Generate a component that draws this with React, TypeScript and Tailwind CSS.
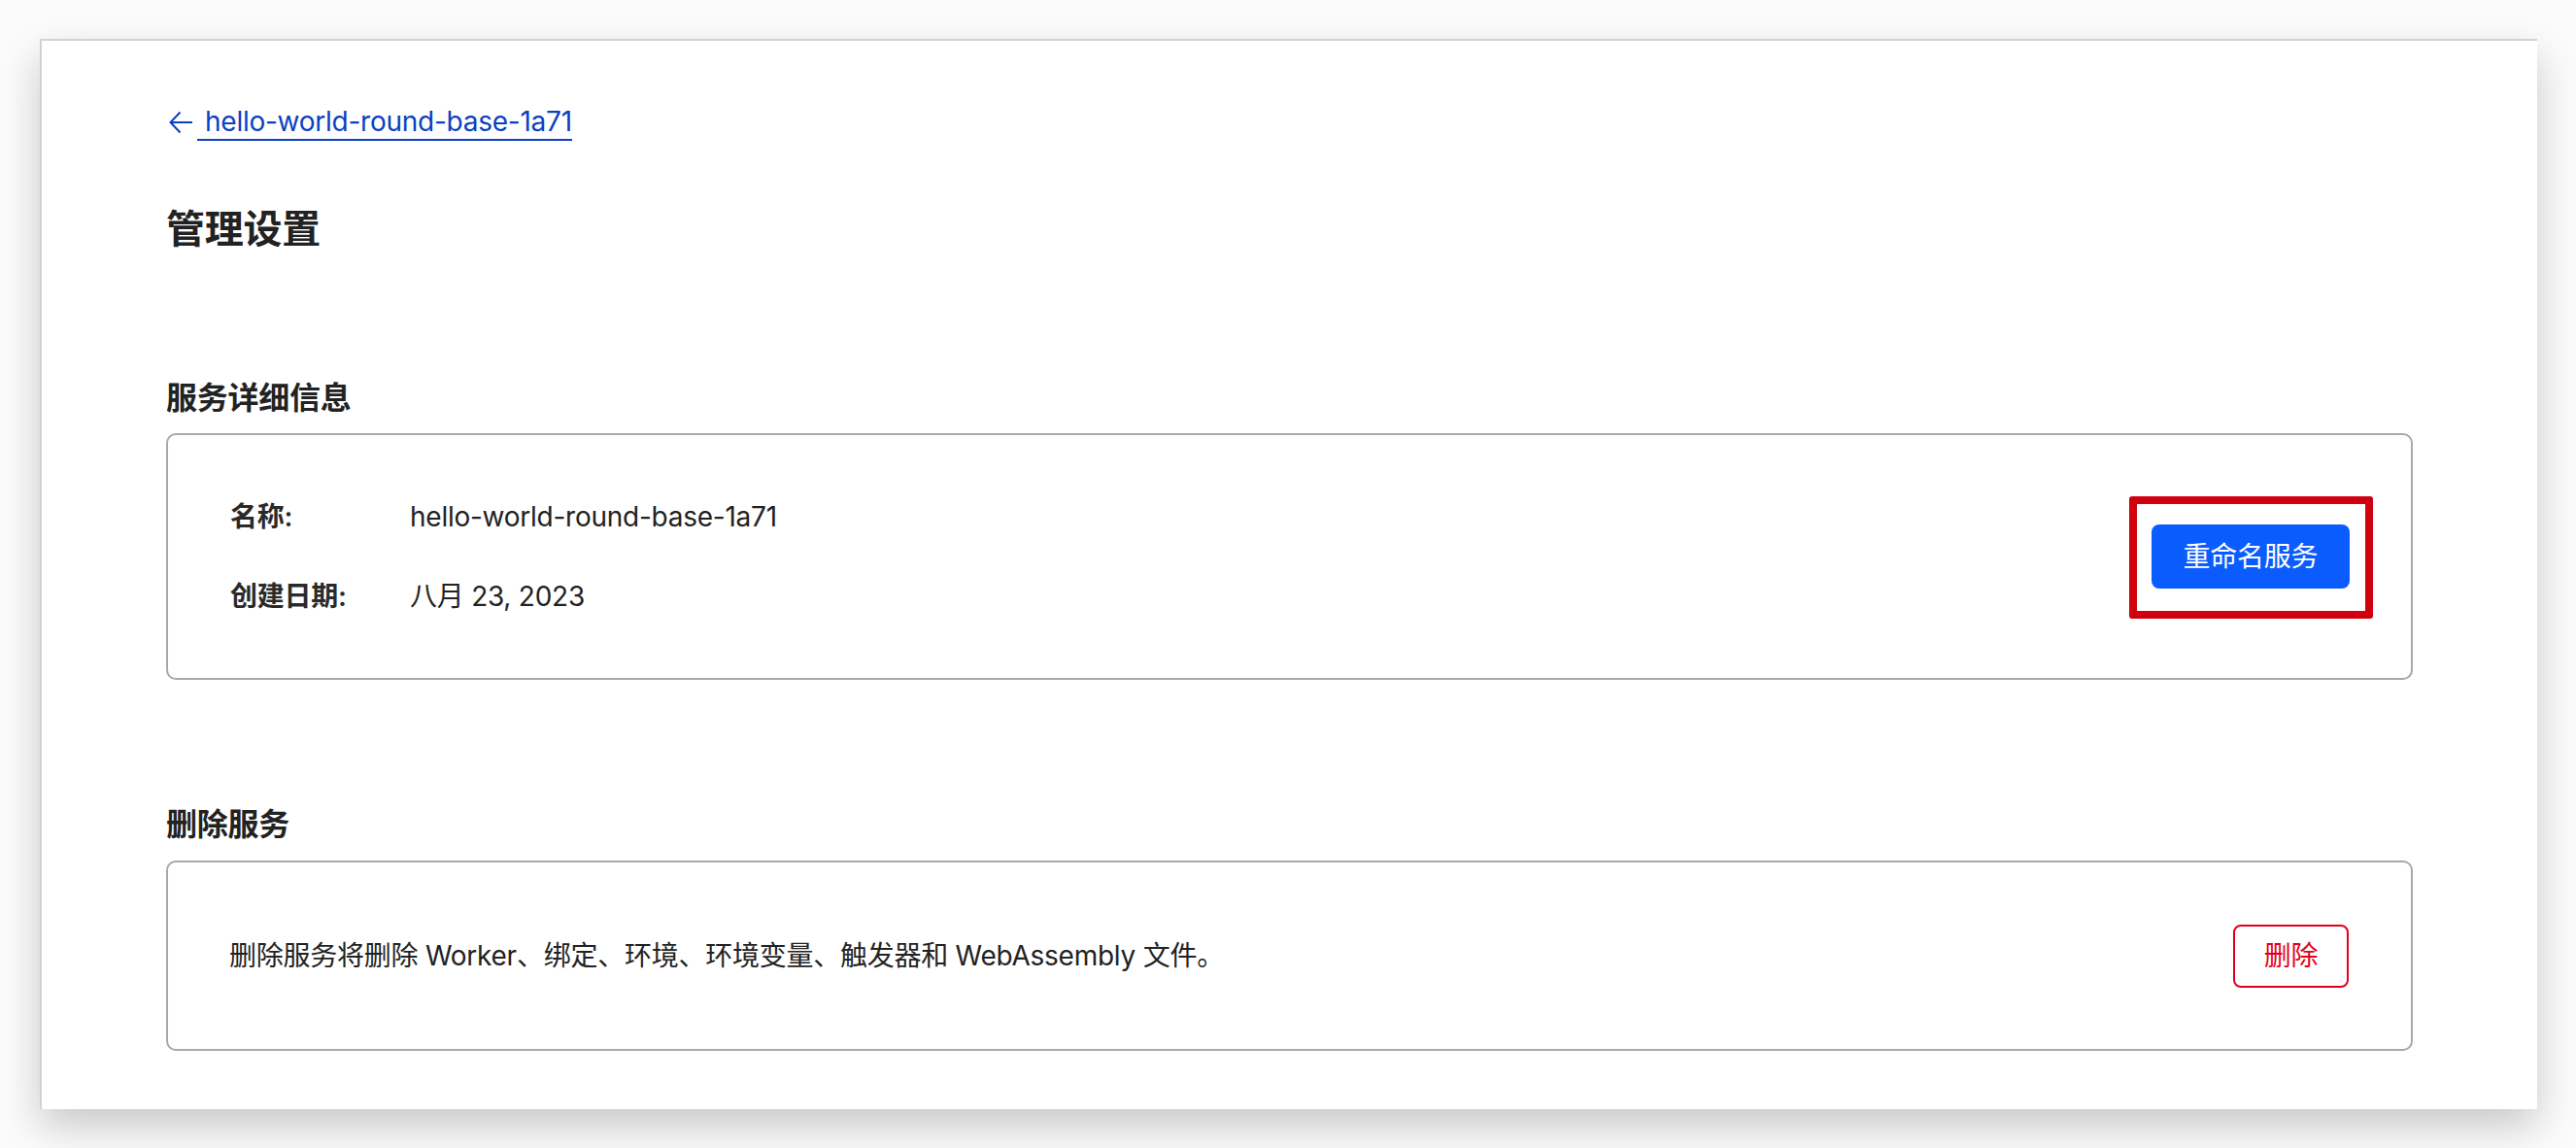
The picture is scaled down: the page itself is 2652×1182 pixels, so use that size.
import React from "react";

const font = "font-['Inter','Noto_Sans_CJK_SC',sans-serif] tracking-[-0.25px]";

function Row({ label, value }: { label: string; value: string }) {
  return (
    <div className="flex h-[40px] items-center">
      <span className="w-[185px] shrink-0 text-[28px] font-semibold text-[#2a2a2a]">{label}</span>
      <span className="text-[28px] text-[#222]">{value}</span>
    </div>
  );
}

export default function App() {
  return (
    <div className={`${font} h-[1182px] w-[2652px] overflow-hidden bg-[#fbfbfb] pl-[41px] pr-[40px] pt-[40px]`}>
      <div className="flex h-[1102px] flex-col border-l-2 border-t-2 border-[#d2d2d2] bg-white pl-[128px] pr-[128px] pt-[64px] shadow-[0_18px_40px_rgba(0,0,0,0.2)]">
        {/* Back link */}
        <div className="flex h-[40px] items-center text-[#0b3fc4]">
          <svg width="26" height="24" viewBox="0 0 26 24" fill="none" stroke="currentColor" strokeWidth="2" className="ml-[3px] mr-[3px]">
            <path d="M24 12H2M11.5 1.5L1.5 12 11.5 22.5" />
          </svg>
          <a href="#" className="border-b-[2.5px] border-[#0b3fc4] pl-[8px] text-[28px] leading-[36px]">
            hello-world-round-base-1a71
          </a>
        </div>

        <h1 className="mt-[66px] h-[48px] text-[40px] font-bold leading-[48px] text-[#222]">管理设置</h1>

        {/* Service details */}
        <h2 className="mt-[130px] h-[40px] text-[32px] font-semibold leading-[40px] text-[#222]">服务详细信息</h2>
        <div className="mt-[16px] flex h-[254px] items-center justify-between rounded-[10px] border-2 border-[#a8a8a8] pl-[64px] pr-[63px]">
          <div className="flex flex-col gap-[42px]">
            <Row label="名称:" value="hello-world-round-base-1a71" />
            <Row label="创建日期:" value="八月 23, 2023" />
          </div>
          <div className="relative">
            <button className="h-[66px] w-[204px] rounded-[8px] bg-[#0b5cff] text-[28px] text-white">重命名服务</button>
            <div className="pointer-events-none absolute -bottom-[31px] -left-[23px] -right-[24px] -top-[29px] rounded-[3px] border-[8px] border-[#d0000f]" />
          </div>
        </div>

        {/* Delete service */}
        <h2 className="mt-[129px] h-[40px] text-[32px] font-semibold leading-[40px] text-[#222]">删除服务</h2>
        <div className="mt-[17px] flex h-[196px] items-center justify-between rounded-[10px] border-2 border-[#a8a8a8] pl-[63px] pr-[64px]">
          <p className="text-[28px] text-[#222]">删除服务将删除 Worker、绑定、环境、环境变量、触发器和 WebAssembly 文件。</p>
          <button className="h-[65px] w-[119px] rounded-[8px] border-2 border-[#e3001b] text-[28px] text-[#e3001b]">删除</button>
        </div>
      </div>
    </div>
  );
}
